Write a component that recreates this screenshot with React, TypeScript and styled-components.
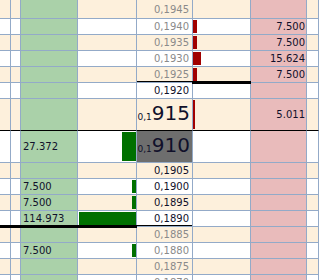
import React from "react";
import styled, { createGlobalStyle, css } from "styled-components";

const GlobalStyle = createGlobalStyle`
  html, body {
    margin: 0;
    padding: 0;
    background: #ffffff;
    overflow: hidden;
  }
  body {
    font-family: "DejaVu Sans", Verdana, sans-serif;
  }
`;

const GRID = "#93aac8";
const CREAM = "#fdf0dc";
const BID_BG = "#aad1a9";
const ASK_BG = "#e9bbbb";
const MAX_VOL = 114973;
const BAR_SPACE = 57;

type Level = {
  price: string;
  bid?: number;
  ask?: number;
  big?: boolean;
  current?: boolean;
  dim?: boolean;
  askEdge?: boolean;
  bidEdge?: boolean;
  spread?: boolean;
};

const levels: Level[] = [
  { price: "0,1945", dim: true },
  { price: "0,1940", ask: 7500, dim: true },
  { price: "0,1935", ask: 7500, dim: true },
  { price: "0,1930", ask: 15624, dim: true },
  { price: "0,1925", ask: 7500, dim: true, askEdge: true },
  { price: "0,1920" },
  { price: "0,1915", ask: 5011, big: true, spread: true },
  { price: "0,1910", bid: 27372, big: true, current: true },
  { price: "0,1905" },
  { price: "0,1900", bid: 7500 },
  { price: "0,1895", bid: 7500 },
  { price: "0,1890", bid: 114973, bidEdge: true },
  { price: "0,1885", dim: true },
  { price: "0,1880", bid: 7500, dim: true },
  { price: "0,1875", dim: true },
  { price: "0,1870", dim: true },
];

const fmt = (n: number) => String(n).replace(/\B(?=(\d{3})+(?!\d))/g, ".");
const barWidth = (n: number) => Math.max(2, Math.round((n / MAX_VOL) * BAR_SPACE));

const rowHeight = (lv: Level, i: number) => (lv.big ? 32 : i === 0 ? 19 : 16);

const Ladder = () => (
  <Board>
    {levels.map((lv, i) => {
      const odd = lv.price.endsWith("5");
      const bg = odd ? CREAM : "#ffffff";
      return (
        <Row key={lv.price} $h={rowHeight(lv, i)} $spread={lv.spread}>
          <Cell $bg={bg} $edge={lv.bidEdge} />
          <Cell $bg={bg} $edge={lv.bidEdge} />
          <VolCell $bg={BID_BG} $edge={lv.bidEdge}>
            {lv.bid ? fmt(lv.bid) : ""}
          </VolCell>
          <BarCell $bg={bg} $edge={lv.bidEdge} $side="bid">
            {lv.bid ? <Bar $side="bid" style={{ width: barWidth(lv.bid) }} /> : null}
          </BarCell>
          <PriceCell
            $bg={lv.current ? "#6e6e6e" : bg}
            $dim={lv.dim}
            $big={lv.big}
            $edge={lv.bidEdge || lv.askEdge}
          >
            {lv.big ? (
              <BigPrice>
                <Prefix>{lv.price.slice(0, 3)}</Prefix>
                <Digits>{lv.price.slice(3)}</Digits>
              </BigPrice>
            ) : (
              lv.price
            )}
          </PriceCell>
          <BarCell $bg={bg} $edge={lv.askEdge} $side="ask">
            {lv.ask ? <Bar $side="ask" style={{ width: barWidth(lv.ask) }} /> : null}
          </BarCell>
          <VolCell $bg={ASK_BG} $right>
            {lv.ask ? fmt(lv.ask) : ""}
          </VolCell>
          <Cell $bg={bg} />
        </Row>
      );
    })}
  </Board>
);

export default function App() {
  return (
    <>
      <GlobalStyle />
      <Ladder />
    </>
  );
}

const Board = styled.div`
  width: 319px;
  display: flex;
  flex-direction: column;
`;

const Row = styled.div<{ $h: number; $spread?: boolean }>`
  display: grid;
  grid-template-columns: 11px 10px 57px 59px 56px 58px 56px 1fr;
  height: ${(p) => p.$h}px;
  flex-shrink: 0;
  & > div {
    border-bottom-color: ${(p) => (p.$spread ? "#000000" : GRID)};
  }
`;

const Cell = styled.div<{ $bg: string; $edge?: boolean }>`
  position: relative;
  box-sizing: border-box;
  background: ${(p) => p.$bg};
  border-right: 1px solid ${GRID};
  border-bottom: 1px solid ${GRID};
  min-width: 0;
  ${(p) =>
    p.$edge &&
    css`
      &::after {
        content: "";
        position: absolute;
        left: -1px;
        right: -1px;
        bottom: -2px;
        height: 3px;
        background: #000000;
        z-index: 2;
      }
    `}
`;

const VolCell = styled(Cell)<{ $right?: boolean }>`
  display: flex;
  align-items: center;
  justify-content: ${(p) => (p.$right ? "flex-end" : "flex-start")};
  padding: ${(p) => (p.$right ? "0 1px 0 0" : "0 0 0 2px")};
  font-size: 10px;
  color: #10102a;
  white-space: nowrap;
`;

const BarCell = styled(Cell)<{ $side: "bid" | "ask" }>`
  display: flex;
  justify-content: ${(p) => (p.$side === "bid" ? "flex-end" : "flex-start")};
  padding: 1px 0;
`;

const Bar = styled.div<{ $side: "bid" | "ask" }>`
  height: 100%;
  background: ${(p) => (p.$side === "bid" ? "#007000" : "#a00000")};
`;

const PriceCell = styled(Cell)<{ $dim?: boolean; $big?: boolean }>`
  display: flex;
  align-items: center;
  justify-content: flex-end;
  padding: ${(p) => (p.$big ? "0 2px 3px 0" : "0 3px 0 0")};
  font-size: 10px;
  color: ${(p) => (p.$dim ? "#8a8a8a" : "#10102a")};
  white-space: nowrap;
  overflow: hidden;
`;

const BigPrice = styled.span`
  display: block;
  line-height: 1;
  color: #10102a;
  white-space: nowrap;
`;

const Prefix = styled.span`
  font-size: 9px;
`;

const Digits = styled.span`
  font-size: 20px;
`;
